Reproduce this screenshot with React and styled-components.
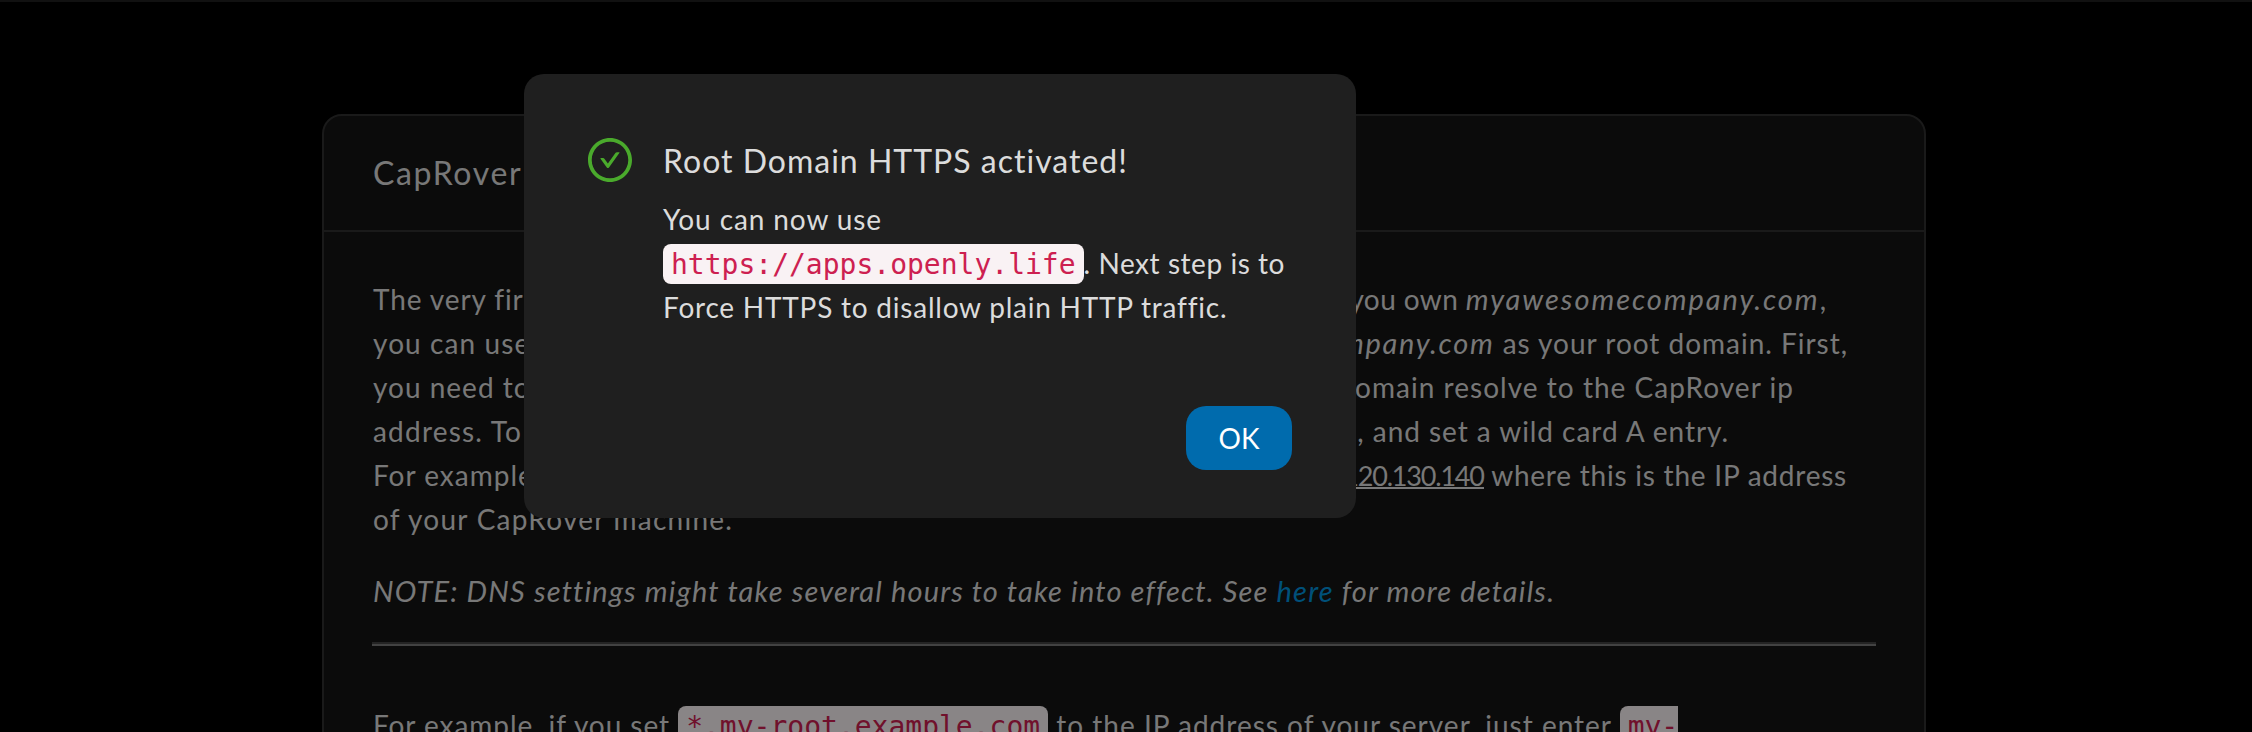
import React from "react";
import styled, { createGlobalStyle } from "styled-components";

const GlobalStyle = createGlobalStyle`
  * { box-sizing: border-box; }
  body {
    margin: 0;
    background: #000;
    color: rgba(255, 255, 255, 0.85);
    font-family: Lato, "Liberation Sans", sans-serif;
    font-size: 28px;
    line-height: 44px;
  }
`;

const Page = styled.div`
  position: relative;
  width: 2252px;
  height: 732px;
  overflow: hidden;
`;

const TopBar = styled.header`
  height: 2px;
  background: #202020;
`;

const Card = styled.section`
  width: 1604px;
  height: 700px;
  margin: 112px 0 0 322px;
  border: 2px solid #303030;
  border-radius: 20px;
  background: #141414;
`;

const CardHeader = styled.div`
  height: 116px;
  padding: 33px 49px;
  border-bottom: 2px solid #303030;
  font-size: 32px;
  line-height: 48px;
`;

const CardBody = styled.div`
  padding: 45px 48px 0;
`;

const Paragraph = styled.div`
  margin: 0 0 28px 1px;
`;

const Line = styled.div`
  display: flex;
  justify-content: space-between;
  width: ${(p) => (p.$width ? `${p.$width}px` : "auto")};
  height: 44px;
  white-space: pre;
`;

const Run = styled.span`
  letter-spacing: ${(p) => p.$track || 0}px;
  white-space: pre;
`;

const Emphasis = styled(Run).attrs({ as: "em" })`
  font-size: 29px;
  line-height: 28px;
  font-style: italic;
`;

const Underlined = styled(Run).attrs({ as: "u" })`
  display: inline-block;
  border-bottom: 2px solid currentColor;
  font-size: 27px;
  line-height: 23px;
  text-decoration: none;
`;

const Link = styled.a`
  color: #0092dc;
`;

const Divider = styled.hr`
  height: 4px;
  margin: 29px 0 57px;
  border: 0;
  border-top: 2px solid #424242;
  border-bottom: 2px solid #787878;
`;

const Closing = styled.div`
  padding-left: 1px;
  white-space: nowrap;
`;

const Code = styled.code`
  padding: 4px 8px 3px;
  border-radius: 8px;
  background: #f9f2f4;
  color: #cd2050;
  font-family: "DejaVu Sans Mono", monospace;
  font-size: 28px;
  line-height: 28px;
`;

const WrappedCode = styled(Code)`
  padding-right: 0;
  border-radius: 8px 0 0 8px;
`;

const Mask = styled.div`
  position: absolute;
  inset: 0;
  padding: 74px 0 0 524px;
  background: rgba(0, 0, 0, 0.45);
`;

const Dialog = styled.div`
  display: flex;
  flex-direction: column;
  justify-content: space-between;
  width: 832px;
  height: 444px;
  padding: 62px 64px 48px;
  border-radius: 20px;
  background: #1f1f1f;
`;

const DialogContent = styled.div`
  display: flex;
  gap: 31px;
`;

const StatusIcon = styled.svg`
  width: 44px;
  height: 44px;
  margin-top: 2px;
  flex: none;
  fill: #4aaa2c;
`;

const DialogText = styled.div`
  white-space: nowrap;
`;

const DialogTitle = styled.div`
  margin-bottom: 12px;
  font-size: 32px;
  line-height: 49px;
`;

const OkButton = styled.button`
  align-self: flex-end;
  width: 106px;
  height: 64px;
  padding: 0;
  border: 0;
  border-radius: 20px;
  background: #006bad;
  color: #fff;
  font: inherit;
`;

export default function App() {
  return (
    <Page>
      <GlobalStyle />
      <TopBar />
      <Card>
        <CardHeader>
          <Run $track={1.65}>CapRover Root Domain Configurations</Run>
        </CardHeader>
        <CardBody>
          <Paragraph>
            <Line $width={1453}>
              <Run $track={0.9}>The very first</Run>
              <Run>thing that CapRover needs is a root domain. For example, if</Run>
              <span>
                <Run $track={0.4}>you own </Run>
                <Emphasis $track={1.95}>myawesomecompany.com</Emphasis>,
              </span>
            </Line>
            <Line $width={1475}>
              <Run $track={1.1}>you can use</Run>
              <Run>any subdomain of it, such as</Run>
              <span>
                <Emphasis $track={1.7}>foo.bar.myawesomecompany.com</Emphasis>
                <Run $track={0.98}> as your root domain. First,</Run>
              </span>
            </Line>
            <Line $width={1421}>
              <Run $track={1}>you need to</Run>
              <Run>make sure that the ip address for all subdomains of the root</Run>
              <Run $track={1.03}>domain resolve to the CapRover ip</Run>
            </Line>
            <Line $width={1356}>
              <Run $track={1.2}>address. To</Run>
              <Run>do this, go to the DNS settings in your domain provider website</Run>
              <Run $track={0.95}>, and set a wild card A entry.</Run>
            </Line>
            <Line $width={1474}>
              <Run $track={1}>For example:</Run>
              <Run>Type: A, Name (or host): *.caprover-root, IP (or Points to):</Run>
              <span>
                <Underlined $track={-1.2}>110.120.130.140</Underlined>
                <Run $track={0.77}> where this is the IP address</Run>
              </span>
            </Line>
            <Line>
              <Run $track={1.25}>of your CapRover machine.</Run>
            </Line>
          </Paragraph>
          <Paragraph>
            <Emphasis $track={1.17}>
              NOTE: DNS settings might take several hours to take into effect. See{" "}
              <Link>here</Link> for more details.
            </Emphasis>
          </Paragraph>
          <Divider />
          <Closing>
            <Run $track={0.94}>For example, if you set </Run>
            <Code>*.my-root.example.com</Code>
            <Run $track={1}> to the IP address of your server, just enter </Run>
            <WrappedCode>my-</WrappedCode>
          </Closing>
        </CardBody>
      </Card>
      <Mask>
        <Dialog>
          <DialogContent>
            <StatusIcon viewBox="64 64 896 896">
              <path d="M699 353h-46.900c-10.200 0-19.900 4.900-25.900 13.300L469 584.300l-71.200-98.800c-6-8.300-15.600-13.300-25.900-13.300H325c-6.500 0-10.300 7.400-6.500 12.700l124.600 172.800a31.800 31.800 0 0 0 51.700 0l210.600-292c3.900-5.300.1-12.700-6.400-12.700z" />
              <path d="M512 64C264.600 64 64 264.600 64 512s200.600 448 448 448 448-200.600 448-448S759.400 64 512 64zm0 820c-205.400 0-372-166.600-372-372s166.600-372 372-372 372 166.600 372 372-166.600 372-372 372z" />
            </StatusIcon>
            <DialogText>
              <DialogTitle>
                <Run $track={1}>Root Domain HTTPS activated!</Run>
              </DialogTitle>
              <Run $track={0.9}>You can now use</Run>
              <br />
              <Code>https://apps.openly.life</Code>
              <Run $track={0.55}>. Next step is to</Run>
              <br />
              <Run $track={0.77}>Force HTTPS to disallow plain HTTP traffic.</Run>
            </DialogText>
          </DialogContent>
          <OkButton>OK</OkButton>
        </Dialog>
      </Mask>
    </Page>
  );
}
